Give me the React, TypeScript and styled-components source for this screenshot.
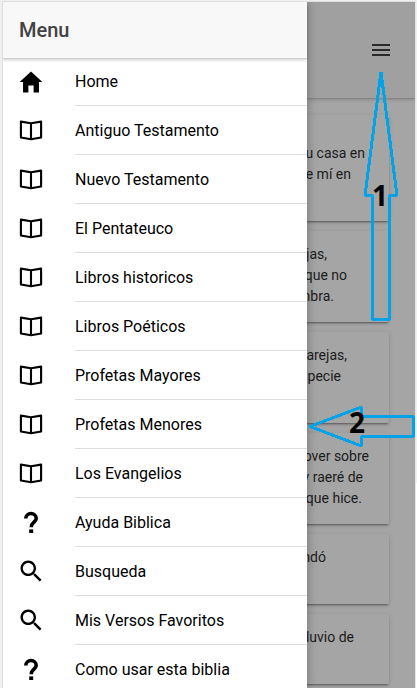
import React from "react";
import styled, { createGlobalStyle } from "styled-components";
import { IoMdHome, IoMdSearch } from "react-icons/io";

const GlobalStyle = createGlobalStyle`
  * { box-sizing: border-box; }
  body { margin: 0; background: #f0f0f0; font-family: Roboto, "Liberation Sans", sans-serif; }
`;

const Frame = styled.div`
  position: relative;
  width: 417px;
  height: 688px;
  padding: 1px 1px 0 2px;
  overflow: hidden;
  background: linear-gradient(#f0f0f0 483px, #fff 483px) right / 2px 100% no-repeat, #f0f0f0;
`;

const Screen = styled.div`
  display: flex;
  height: 687px;
  overflow: hidden;
  border: 1px solid #dedede;
  border-right-color: #e6e6e6;
  border-bottom: 0;
`;

const Drawer = styled.nav`
  position: relative;
  z-index: 1;
  flex: 0 0 304px;
  height: 686px;
  background: #fff;
  box-shadow: 0 0 10px rgba(0, 0, 0, 0.3);
`;

const DrawerHeader = styled.header`
  display: flex;
  align-items: center;
  height: 56px;
  padding: 0 16px;
  background: #f8f8f8;
  color: #424242;
  font-size: 20px;
  font-weight: 500;
  box-shadow: 0 1px 0 #d0d0d0, 0 2px 3px rgba(0, 0, 0, 0.2);
`;

const MenuList = styled.ul`
  margin: 0;
  padding: 0;
  list-style: none;
  height: 630px;
  overflow: hidden;
`;

const MenuItem = styled.li`
  display: flex;
  align-items: center;
  height: 49px;
  padding-left: 14px;
  &:first-child { height: 48px; }
  svg { flex: none; display: block; margin-bottom: 1px; }
`;

const Label = styled.span`
  display: flex;
  align-items: center;
  flex: 1;
  height: 100%;
  margin-left: 30px;
  border-bottom: 1px solid #dedede;
  font-size: 16px;
  color: #000;
`;

const Page = styled.main`
  flex: 1;
  min-width: 0;
  height: 686px;
  overflow: hidden;
  background: #a5a5a5;
`;

const Toolbar = styled.div`
  display: flex;
  align-items: center;
  justify-content: flex-end;
  height: 96px;
  padding-right: 25px;
  background: #a0a0a0;
  box-shadow: 0 1px 1px #858585, 0 2px 4px rgba(0, 0, 0, 0.14);
`;

const MenuButton = styled.button`
  display: grid;
  gap: 3px;
  width: 18px;
  padding: 0;
  border: 0;
  background: none;
`;

const Bar = styled.span`
  height: 2px;
  background: #2a2a2a;
`;

const Cards = styled.div`
  display: grid;
  gap: 10px;
  margin: 17px 26px 0 -12px;
`;

const Card = styled.article<{ $height: number; $top: number }>`
  height: ${(p) => p.$height}px;
  padding-top: ${(p) => p.$top}px;
  border-radius: 2px;
  background: #a5a5a5;
  box-shadow: 0 2px 2px rgba(0, 0, 0, 0.14), 0 3px 1px -2px rgba(0, 0, 0, 0.2), 0 1px 5px rgba(0, 0, 0, 0.12);
`;

const Verse = styled.p<{ $right: number }>`
  display: flex;
  justify-content: flex-end;
  margin: 0;
  padding-right: ${(p) => p.$right}px;
  font-size: 14px;
  line-height: 21px;
  white-space: nowrap;
  color: #1c1c1c;
`;

const Annotations = styled.svg`
  position: absolute;
  inset: 0;
  z-index: 2;
`;

const Step = styled.b<{ $x: number; $y: number }>`
  position: absolute;
  z-index: 3;
  left: ${(p) => p.$x}px;
  top: ${(p) => p.$y}px;
  font: bold 28px/28px "Noto Sans", sans-serif;
  color: #000;
`;

const BookIcon = () => (
  <svg width="28" height="28" viewBox="0 0 28 28" fill="none" stroke="#000" strokeWidth="2.1" strokeLinejoin="round">
    <path d="M14 7.2 3.9 5.6V21.5L14 23.2 24.1 21.5V5.6ZM14 7.2V23.2" />
  </svg>
);

const HelpIcon = () => (
  <svg width="28" height="28" viewBox="0 0 28 28" fill="none" stroke="#000" strokeWidth="3.6">
    <path d="M8.8 10.6A5.2 5.1 0 0 1 19.2 10.6C19.2 14.2 14.2 14.4 14.2 19.2" />
    <path d="M14.2 21.4V25" strokeWidth="4" />
  </svg>
);

const icons = {
  home: <IoMdHome size={28} />,
  book: <BookIcon />,
  help: <HelpIcon />,
  search: <IoMdSearch size={28} />,
};

const items: { icon: keyof typeof icons; label: string }[] = [
  { icon: "home", label: "Home" },
  { icon: "book", label: "Antiguo Testamento" },
  { icon: "book", label: "Nuevo Testamento" },
  { icon: "book", label: "El Pentateuco" },
  { icon: "book", label: "Libros historicos" },
  { icon: "book", label: "Libros Poéticos" },
  { icon: "book", label: "Profetas Mayores" },
  { icon: "book", label: "Profetas Menores" },
  { icon: "book", label: "Los Evangelios" },
  { icon: "help", label: "Ayuda Biblica" },
  { icon: "search", label: "Busqueda" },
  { icon: "search", label: "Mis Versos Favoritos" },
  { icon: "help", label: "Como usar esta biblia" },
];

const cards: { height: number; top: number; lines: [string, number][] }[] = [
  { height: 106, top: 28, lines: [["u casa en", 24], ["e mí en", 38]] },
  { height: 91, top: 13, lines: [["jas,", 62], ["que no", 42], ["mbra.", 55]] },
  { height: 91, top: 13, lines: [["arejas,", 42], ["specie", 48]] },
  { height: 91, top: 13, lines: [["over sobre", 20], ["y raeré de", 26], ["que hice.", 27]] },
  { height: 70, top: 13, lines: [["ndó", 63]] },
  { height: 70, top: 13, lines: [["luvio de", 35]] },
  { height: 70, top: 13, lines: [] },
];

export default function App() {
  return (
    <Frame>
      <GlobalStyle />
      <Screen>
        <Drawer>
          <DrawerHeader>Menu</DrawerHeader>
          <MenuList>
            {items.map((item) => (
              <MenuItem key={item.label}>
                {icons[item.icon]}
                <Label>{item.label}</Label>
              </MenuItem>
            ))}
          </MenuList>
        </Drawer>
        <Page>
          <Toolbar>
            <MenuButton aria-label="Menu"><Bar /><Bar /><Bar /></MenuButton>
          </Toolbar>
          <Cards>
            {cards.map((card, i) => (
              <Card key={i} $height={card.height} $top={card.top}>
                {card.lines.map(([text, right]) => (
                  <Verse key={text} $right={right}>{text}</Verse>
                ))}
              </Card>
            ))}
          </Cards>
        </Page>
      </Screen>
      <Annotations width="417" height="688" fill="none" stroke="#00a2e8" strokeWidth="3" strokeLinejoin="bevel" shapeRendering="crispEdges">
        <path d="M381 72 397 195.5H389.5V319.5H372.5V195.5H365Z" />
        <path d="M310 426.5 361.5 407V416.5H413.5V436.5H361.5V446Z" />
      </Annotations>
      <Step $x={372} $y={181}>1</Step>
      <Step $x={349} $y={408}>2</Step>
    </Frame>
  );
}
